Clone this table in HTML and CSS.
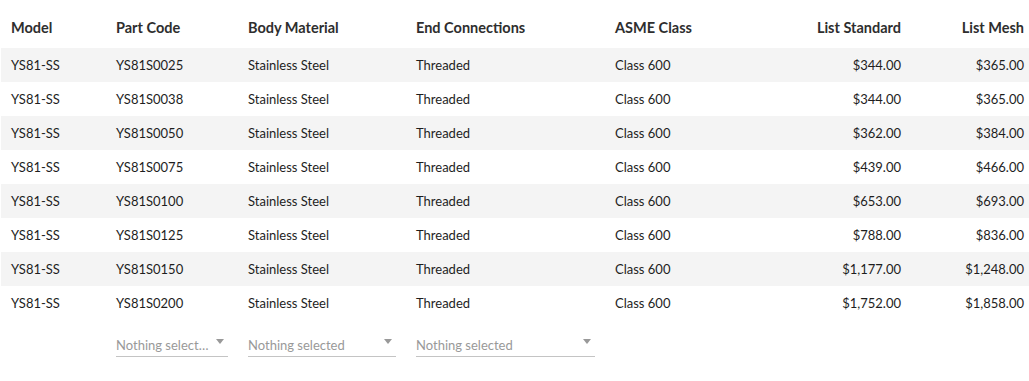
FILE: index.html
```html
<!DOCTYPE html>
<html lang="en">
<head>
<meta charset="utf-8">
<title>Valve Price List</title>
<link rel="stylesheet" href="styles.css">
</head>
<body>
<table class="price-table">
  <colgroup>
    <col class="c-model"><col class="c-part"><col class="c-body"><col class="c-end"><col class="c-asme"><col class="c-std"><col class="c-mesh">
  </colgroup>
  <thead>
    <tr>
      <th>Model</th>
      <th>Part Code</th>
      <th>Body Material</th>
      <th>End Connections</th>
      <th>ASME Class</th>
      <th class="num">List Standard</th>
      <th class="num last">List Mesh</th>
    </tr>
  </thead>
  <tbody>
    <tr><td>YS81-SS</td><td>YS81S0025</td><td>Stainless Steel</td><td>Threaded</td><td>Class 600</td><td class="num">$344.00</td><td class="num last">$365.00</td></tr>
    <tr><td>YS81-SS</td><td>YS81S0038</td><td>Stainless Steel</td><td>Threaded</td><td>Class 600</td><td class="num">$344.00</td><td class="num last">$365.00</td></tr>
    <tr><td>YS81-SS</td><td>YS81S0050</td><td>Stainless Steel</td><td>Threaded</td><td>Class 600</td><td class="num">$362.00</td><td class="num last">$384.00</td></tr>
    <tr><td>YS81-SS</td><td>YS81S0075</td><td>Stainless Steel</td><td>Threaded</td><td>Class 600</td><td class="num">$439.00</td><td class="num last">$466.00</td></tr>
    <tr><td>YS81-SS</td><td>YS81S0100</td><td>Stainless Steel</td><td>Threaded</td><td>Class 600</td><td class="num">$653.00</td><td class="num last">$693.00</td></tr>
    <tr><td>YS81-SS</td><td>YS81S0125</td><td>Stainless Steel</td><td>Threaded</td><td>Class 600</td><td class="num">$788.00</td><td class="num last">$836.00</td></tr>
    <tr><td>YS81-SS</td><td>YS81S0150</td><td>Stainless Steel</td><td>Threaded</td><td>Class 600</td><td class="num">$1,177.00</td><td class="num last">$1,248.00</td></tr>
    <tr><td>YS81-SS</td><td>YS81S0200</td><td>Stainless Steel</td><td>Threaded</td><td>Class 600</td><td class="num">$1,752.00</td><td class="num last">$1,858.00</td></tr>
  </tbody>
  <tfoot>
    <tr>
      <td></td>
      <td><div class="select"><span class="select-text">Nothing selected</span><span class="caret"></span></div></td>
      <td><div class="select"><span class="select-text">Nothing selected</span><span class="caret"></span></div></td>
      <td><div class="select"><span class="select-text">Nothing selected</span><span class="caret"></span></div></td>
      <td></td><td></td><td></td>
    </tr>
  </tfoot>
</table>
</body>
</html>
```

FILE: styles.css
```css
html, body {
  margin: 0;
  padding: 0;
  background: #ffffff;
}

body {
  font-family: "Lato", "Liberation Sans", sans-serif;
  font-size: 13px;
  color: #1e1e1e;
}

.price-table {
  margin-left: 1px;
  width: 1028px;
  border-collapse: collapse;
  table-layout: fixed;
}

.c-model { width: 105px; }
.c-part { width: 132px; }
.c-body { width: 168px; }
.c-end { width: 199px; }
.c-asme { width: 170px; }
.c-std { width: 136px; }
.c-mesh { width: 118px; }

.price-table th {
  text-align: left;
  font-size: 14.5px;
  font-weight: 700;
  color: #2e2e2e;
  line-height: 20px;
  padding: 18px 10px 10px;
  white-space: nowrap;
}

.price-table tbody td {
  line-height: 20px;
  height: 20px;
  padding: 7px 10px;
  white-space: nowrap;
}

.price-table tbody tr:nth-child(odd) {
  background: #f4f4f4;
}

.price-table .num {
  text-align: right;
}

.price-table .last {
  padding-right: 5px;
}

.price-table tfoot td {
  padding: 13px 10px 0;
  vertical-align: top;
}

.select {
  position: relative;
  height: 23px;
  border-bottom: 1px solid #c4c4c4;
  padding-right: 19px;
}

.select-text {
  display: block;
  color: #999999;
  line-height: 20px;
  padding-top: 2px;
  white-space: nowrap;
  overflow: hidden;
  text-overflow: ellipsis;
}

.caret {
  position: absolute;
  right: 4px;
  top: 6px;
  width: 0;
  height: 0;
  border-left: 4px solid transparent;
  border-right: 4px solid transparent;
  border-top: 5px solid #999999;
}
```
